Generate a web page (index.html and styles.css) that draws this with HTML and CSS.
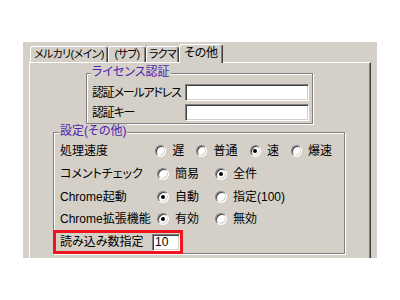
FILE: index.html
```html
<!DOCTYPE html>
<html lang="ja">
<head>
  <meta charset="UTF-8">
  <meta name="viewport" content="width=device-width, initial-scale=1.0">
  <title>その他設定</title>
  <link rel="stylesheet" href="styles.css">
</head>
<body>
  <div class="window">
    <div class="tabs">
      <div class="tab tab-main">メルカリ(メイン)</div>
      <div class="tab tab-sub">(サブ)</div>
      <div class="tab tab-rakuma">ラクマ</div>
      <div class="tab tab-other active">その他</div>
    </div>
    <div class="page">
      <div class="group license">
        <div class="group-title">ライセンス認証</div>
        <div class="field first">
          <span class="field-label">認証メールアドレス</span>
          <input class="input wide" type="text">
        </div>
        <div class="field">
          <span class="field-label">認証キー</span>
          <input class="input wide" type="text">
        </div>
      </div>

      <div class="group settings">
        <div class="group-title">設定(その他)</div>
        <div class="row tight">
          <span class="row-label">処理速度</span>
          <span class="option"><span class="radio"></span>遅</span>
          <span class="option"><span class="radio"></span>普通</span>
          <span class="option"><span class="radio checked"></span>速</span>
          <span class="option"><span class="radio"></span>爆速</span>
        </div>
        <div class="row">
          <span class="row-label">コメントチェック</span>
          <span class="option"><span class="radio"></span>簡易</span>
          <span class="option"><span class="radio checked"></span>全件</span>
        </div>
        <div class="row">
          <span class="row-label">Chrome起動</span>
          <span class="option"><span class="radio checked"></span>自動</span>
          <span class="option"><span class="radio"></span>指定(100)</span>
        </div>
        <div class="row short">
          <span class="row-label">Chrome拡張機能</span>
          <span class="option"><span class="radio checked"></span>有効</span>
          <span class="option"><span class="radio"></span>無効</span>
        </div>
        <div class="highlight">
          <span class="row-label">読み込み数指定</span>
          <input class="input small" type="text" value="10">
        </div>
      </div>
    </div>
  </div>
</body>
</html>
```

FILE: styles.css
```css
/* base */
* {
  margin: 0;
  padding: 0;
  box-sizing: border-box;
}

body {
  background-color: #fff;
  color: #000;
  font-family: "Liberation Sans", "Noto Sans CJK JP", sans-serif;
  font-size: 12px;
  line-height: 14px;
  font-feature-settings: "palt";
}

.window {
  width: 354px;
  height: 216px;
  margin: 42px 0 0 23px;
  background-color: #d4d0c8;
  overflow: hidden;
}

/* tabs */
.tabs {
  display: flex;
  align-items: flex-end;
  height: 20px;
  padding-left: 7px;
}

.tab {
  flex: none;
  display: flex;
  justify-content: center;
  height: 16px;
  border: 1px solid #fff;
  border-right-color: #404040;
  border-bottom: 0;
  border-radius: 3px 3px 0 0;
  box-shadow: inset -1px 0 #808080;
  font-size: 11px;
  line-height: 15px;
  letter-spacing: -0.6px;
  white-space: nowrap;
}

.tab-main { width: 78px; }
.tab-sub { width: 38px; }
.tab-rakuma { width: 33px; }
.tab-other { width: 44px; }

.tab.active {
  position: relative;
  z-index: 1;
  height: 19px;
  margin-bottom: -1px;
  background-color: #d4d0c8;
  font-size: 12px;
  line-height: 16px;
  letter-spacing: -0.3px;
}

.page {
  height: 200px;
  margin: 0 6px;
  border-top: 1px solid #fff;
  border-left: 1px solid #fff;
  border-right: 1px solid #404040;
  box-shadow: inset -1px 0 #808080;
  padding-top: 10px;
}

/* group boxes */
.group {
  border: 1px solid #808080;
  box-shadow: inset 1px 1px #fff, 1px 1px #fff;
}

.group-title {
  width: max-content;
  height: 14px;
  margin-top: -9px;
  padding: 0 1px;
  line-height: 14px;
  color: #4f22b0;
  background-color: #d4d0c8;
}

.license {
  width: 227px;
  margin-left: 56px;
  padding: 0 3px 2px 5px;
}

.license .group-title {
  margin-left: -1px;
}

.field {
  display: flex;
  align-items: center;
  height: 17px;
  margin-top: 3px;
}

.field.first {
  margin-top: 5px;
}

.field-label {
  width: 93px;
  white-space: nowrap;
  letter-spacing: -1.2px;
}

.input {
  height: 17px;
  padding: 0 2px;
  border: 1px solid;
  border-color: #808080 #fff #fff #808080;
  box-shadow: inset 1px 1px #404040, inset -1px -1px #d4d0c8;
  background-color: #fff;
  font: inherit;
  font-size: 12px;
  line-height: 15px;
  outline: none;
}

.input.wide {
  width: 124px;
}

.input.small {
  width: 28px;
}

.settings {
  width: 292px;
  margin: 8px 0 0 23px;
  padding: 0 0 0 6px;
}

.settings .group-title {
  margin-left: -1px;
  margin-bottom: 1px;
}

/* setting rows */
.row {
  display: flex;
  align-items: center;
  height: 23px;
  white-space: nowrap;
}

.row.short {
  height: 22px;
}

.row-label {
  width: 97px;
  white-space: nowrap;
}

.option {
  display: flex;
  align-items: center;
  min-width: 58px;
}

.row.tight .option {
  min-width: 0;
  margin-right: 12px;
}

.radio {
  width: 12px;
  height: 12px;
  margin-right: 6px;
  border-radius: 50%;
  border: 1px solid;
  border-color: #808080 #fff #fff #808080;
  box-shadow: inset 1px 1px #404040, inset -1px -1px #d4d0c8;
  background-color: #fff;
  display: flex;
  align-items: center;
  justify-content: center;
}

.radio.checked::after {
  content: "";
  width: 4px;
  height: 4px;
  border-radius: 50%;
  background-color: #000;
}

/* annotation */
.highlight {
  display: flex;
  align-items: center;
  width: 130px;
  height: 24px;
  margin: 0 0 -1px -7px;
  padding-left: 4px;
  border: 3px solid #f0141e;
  white-space: nowrap;
}

.highlight .row-label {
  width: 92px;
}
```
